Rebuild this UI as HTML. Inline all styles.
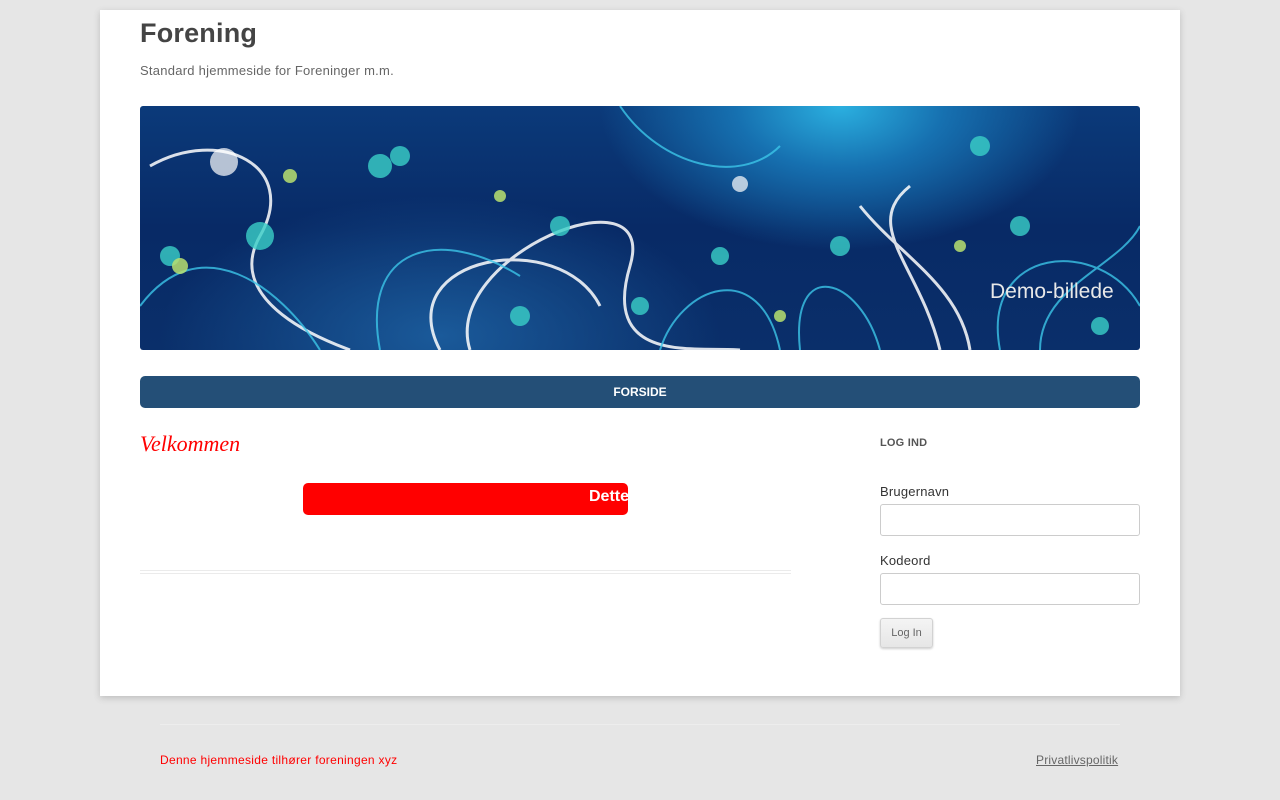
<!DOCTYPE html>
<html><head><meta charset="utf-8"><style>
body{margin:0;background:#e6e6e6;font-family:"Liberation Sans",sans-serif;width:1280px;height:800px;overflow:hidden;position:relative}
.page{position:absolute;left:100px;top:10px;width:1080px;height:686px;background:#fff;box-shadow:0 2px 6px rgba(100,100,100,.3)}
h1{position:absolute;left:40px;top:8px;margin:0;font-size:27px;font-weight:bold;color:#444;letter-spacing:.2px}
.desc{position:absolute;left:40px;top:53px;font-size:13px;color:#666;letter-spacing:.25px}
.banner{position:absolute;left:40px;top:96px;width:1000px;height:244px;border-radius:3px;overflow:hidden;
background:radial-gradient(ellipse 300px 180px at 700px 0px,#2bb0e0 0%,#1670b0 35%,transparent 80%),radial-gradient(ellipse 400px 200px at 300px 230px,#1a5a9a,transparent 70%),linear-gradient(180deg,#0b3a7a 0%,#082a66 50%,#0a2f6a 100%)}
.nav{position:absolute;left:40px;top:366px;width:1000px;height:32px;background:#244f77;border-radius:5px;color:#fff;font-size:12px;font-weight:bold;text-align:center;line-height:32px}
.welcome{position:absolute;left:40px;top:421px;font-family:"Liberation Serif",serif;font-style:italic;font-size:22px;color:#f00}
.red{position:absolute;left:203px;top:473px;width:325px;height:32px;background:#f00;border-radius:5px;overflow:hidden;color:#fff;font-weight:bold;font-size:16px;line-height:28px}
.red span{position:absolute;left:286px}
.hr{position:absolute;left:40px;top:560px;width:651px;height:2px;border-top:1px solid #ebebeb;border-bottom:1px solid #ebebeb}
.lbl{position:absolute;font-size:13px;color:#333;white-space:nowrap;letter-spacing:.2px}
.inp{position:absolute;width:258px;height:30px;border:1px solid #ccc;border-radius:3px;background:#fff}
.btn{position:absolute;left:780px;top:608px;width:51px;height:28px;border:1px solid #d2d2d2;border-radius:3px;background:linear-gradient(#f4f4f4,#e6e6e6);font-size:11px;color:#666;text-align:center;line-height:28px;box-shadow:0 1px 2px rgba(0,0,0,.2)}
.foot{position:absolute;left:160px;top:724px;width:960px;border-top:1px solid #ededed}
</style></head><body>
<div class="page">
<h1>Forening</h1>
<div class="desc">Standard hjemmeside for Foreninger m.m.</div>
<div class="banner">
<svg width="1000" height="244" style="position:absolute;left:0;top:0">
<g fill="none" stroke="#fff" stroke-width="3" opacity=".85">
<path d="M10 60 C80 20 160 60 120 130 S 200 240 210 244"/>
<path d="M300 244 C250 150 420 120 460 200"/>
<path d="M330 244 C300 150 520 60 490 160 S 560 240 600 244"/>
<path d="M720 100 C760 150 820 180 830 244"/>
<path d="M800 244 C780 160 720 120 770 80"/>
</g>
<g fill="none" stroke="#3cc6e8" stroke-width="2" opacity=".8">
<path d="M0 200 C60 120 140 180 180 244"/>
<path d="M240 244 C220 140 300 120 380 170"/>
<path d="M520 244 C540 180 620 150 640 244"/>
<path d="M660 244 C650 150 720 170 740 244"/>
<path d="M860 244 C840 140 960 130 1000 200"/>
<path d="M900 244 C900 180 980 160 1000 120"/>
<path d="M480 0 C520 60 600 80 640 40"/>
</g>
<g fill="#3ad0c8" opacity=".8">
<circle cx="120" cy="130" r="14"/><circle cx="240" cy="60" r="12"/><circle cx="260" cy="50" r="10"/><circle cx="420" cy="120" r="10"/><circle cx="580" cy="150" r="9"/><circle cx="700" cy="140" r="10"/><circle cx="840" cy="40" r="10"/><circle cx="880" cy="120" r="10"/><circle cx="380" cy="210" r="10"/><circle cx="500" cy="200" r="9"/><circle cx="30" cy="150" r="10"/><circle cx="960" cy="220" r="9"/>
</g>
<g fill="#b8e070" opacity=".85"><circle cx="40" cy="160" r="8"/><circle cx="150" cy="70" r="7"/><circle cx="360" cy="90" r="6"/><circle cx="820" cy="140" r="6"/><circle cx="640" cy="210" r="6"/></g>
<circle cx="84" cy="56" r="14" fill="#fff" opacity=".7"/>
<circle cx="600" cy="78" r="8" fill="#fff" opacity=".7"/>
<text x="850" y="192" font-family="Liberation Sans,sans-serif" font-size="21" fill="#e8e8e8">Demo-billede</text>
</svg>
</div>
<div class="nav">FORSIDE</div>
<div class="welcome">Velkommen</div>
<div class="red"><span>Dette</span></div>
<div class="hr"></div>
<div class="lbl" style="left:780px;top:427px;font-size:11px;font-weight:bold;color:#555">LOG IND</div>
<div class="lbl" style="left:780px;top:474px">Brugernavn</div>
<div class="inp" style="left:780px;top:494px"></div>
<div class="lbl" style="left:780px;top:543px">Kodeord</div>
<div class="inp" style="left:780px;top:563px"></div>
<div class="btn">Log In</div>
</div>
<div class="foot"></div>
<div class="lbl" style="left:160px;top:753px;font-size:12px;color:#f00;letter-spacing:.3px">Denne hjemmeside tilhører foreningen xyz</div>
<div class="lbl" style="left:1036px;top:753px;font-size:12px;color:#666;text-decoration:underline">Privatlivspolitik</div>
</body></html>
